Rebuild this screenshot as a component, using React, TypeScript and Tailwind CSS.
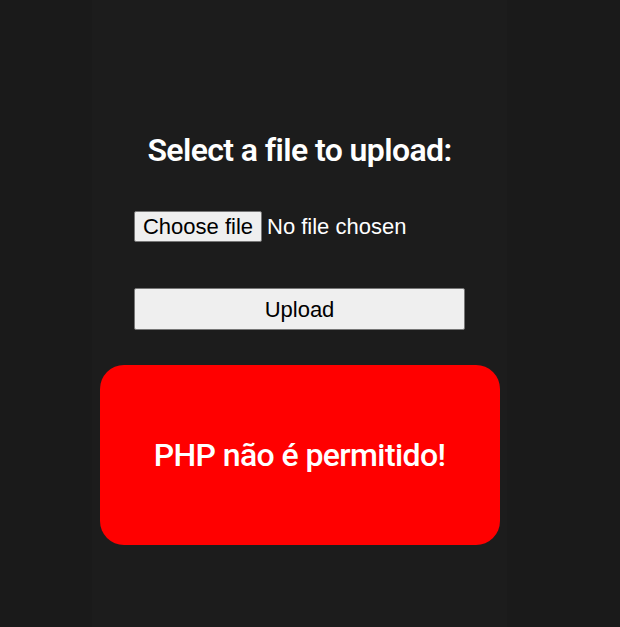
import React, { useState } from "react";

export default function App() {
  const [fileName, setFileName] = useState<string>("No file chosen");
  return (
    <div className="min-h-screen w-full bg-[#1a1a1a] pl-[92px]">
      <div className="w-[415px] min-h-[627px] bg-[#1c1c1c] flex flex-col items-center pt-[128px]">
        <h1 className="font-['Roboto',sans-serif] font-semibold text-white text-[32px] leading-[44px] tracking-[-0.6px]">
          Select a file to upload:
        </h1>
        <form
          className="w-[331px] flex flex-col mt-[39px]"
          onSubmit={(e) => e.preventDefault()}
        >
          <label className="flex items-center h-[31px] cursor-pointer font-['Liberation_Sans',Arial,sans-serif] text-[22px] text-white">
            <span className="h-[31px] w-[128px] flex items-center justify-center bg-[#efefef] text-black border border-solid border-[#767676] rounded-[2px]">
              Choose file
            </span>
            <span className="ml-[5px]">{fileName}</span>
            <input
              type="file"
              className="hidden"
              onChange={(e) =>
                setFileName(e.target.files?.[0]?.name ?? "No file chosen")
              }
            />
          </label>
          <button
            type="submit"
            className="mt-[46px] w-[331px] h-[42px] bg-[#efefef] border border-solid border-[#767676] rounded-[2px] text-black font-['Liberation_Sans',Arial,sans-serif] text-[22px]"
          >
            Upload
          </button>
        </form>
        <div className="mt-[35px] w-[400px] h-[180px] rounded-[24px] bg-[#ff0000] flex items-center justify-center">
          <span className="font-['Roboto',sans-serif] font-medium text-white text-[32px] tracking-[-0.6px]">
            PHP não é permitido!
          </span>
        </div>
      </div>
    </div>
  );
}
